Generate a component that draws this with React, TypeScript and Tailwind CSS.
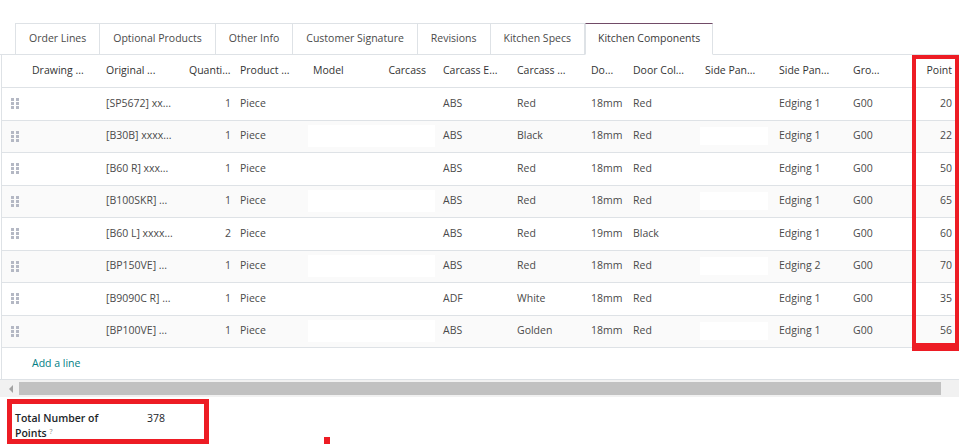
import React from "react";

type Row = {
  original: string;
  qty: number;
  carcassE: string;
  carcassColor: string;
  door: string;
  doorColor: string;
  sidePan: string;
  gro: string;
  point: number;
  patch?: boolean;
};

const rows: Row[] = [
  { original: "[SP5672] xx...", qty: 1, carcassE: "ABS", carcassColor: "Red", door: "18mm", doorColor: "Red", sidePan: "Edging 1", gro: "G00", point: 20 },
  { original: "[B30B] xxxx...", qty: 1, carcassE: "ABS", carcassColor: "Black", door: "18mm", doorColor: "Red", sidePan: "Edging 1", gro: "G00", point: 22, patch: true },
  { original: "[B60 R] xxx...", qty: 1, carcassE: "ABS", carcassColor: "Red", door: "18mm", doorColor: "Red", sidePan: "Edging 1", gro: "G00", point: 50 },
  { original: "[B100SKR] ...", qty: 1, carcassE: "ABS", carcassColor: "Red", door: "18mm", doorColor: "Red", sidePan: "Edging 1", gro: "G00", point: 65, patch: true },
  { original: "[B60 L] xxxx...", qty: 2, carcassE: "ABS", carcassColor: "Red", door: "19mm", doorColor: "Black", sidePan: "Edging 1", gro: "G00", point: 60 },
  { original: "[BP150VE] ...", qty: 1, carcassE: "ABS", carcassColor: "Red", door: "18mm", doorColor: "Red", sidePan: "Edging 2", gro: "G00", point: 70, patch: true },
  { original: "[B9090C R] ...", qty: 1, carcassE: "ADF", carcassColor: "White", door: "18mm", doorColor: "Red", sidePan: "Edging 1", gro: "G00", point: 35 },
  { original: "[BP100VE] ...", qty: 1, carcassE: "ABS", carcassColor: "Golden", door: "18mm", doorColor: "Red", sidePan: "Edging 1", gro: "G00", point: 56, patch: true },
];

const tabs = [
  "Order Lines",
  "Optional Products",
  "Other Info",
  "Customer Signature",
  "Revisions",
  "Kitchen Specs",
  "Kitchen Components",
];

// column track widths
const grid =
  "grid grid-cols-[22px_74px_83px_54px_70px_74px_56px_74px_74px_42px_72px_74px_74px_48px_66px]";

const Handle = () => (
  <svg width="8" height="11" viewBox="0 0 8 11" className="ml-[9px]">
    {[0, 4, 8].map((y) =>
      [0, 5].map((x) => <rect key={`${x}-${y}`} x={x} y={y} width="3" height="3" fill="#b4b8c4" />)
    )}
  </svg>
);

export default function App() {
  return (
    <div className="relative h-[444px] w-[959px] overflow-hidden bg-white pt-[23px] font-['Open_Sans',sans-serif] text-[10.5px] text-[#4a4a4a]">
      {/* notebook tabs */}
      <div className="flex border-b border-[#dee2e6] pl-[15px]">
        {tabs.map((t) => {
          const active = t === "Kitchen Components";
          return (
            <div
              key={t}
              className={
                active
                  ? "-mb-px flex h-[32px] items-center border border-b-white border-t-[#714b67] border-x-[#dee2e6] bg-white px-[12px] text-[#3a3a3a]"
                  : "flex h-[31px] items-center border border-b-0 border-[#dee2e6] px-[13px] -ml-px first:ml-0"
              }
            >
              {t}
            </div>
          );
        })}
      </div>

      {/* list */}
      <div className="ml-[1px] border-l border-[#dee2e6]">
        <div className={`${grid} h-[33px] items-center border-b border-[#dee2e6] text-[#333]`}>
          <div />
          <div className="px-2">Drawing ...</div>
          <div className="px-2">Original ...</div>
          <div className="pl-2 whitespace-nowrap">Quanti...</div>
          <div className="pl-[5px]">Product ...</div>
          <div className="px-2">Model</div>
          <div className="pr-[9px] text-right">Carcass</div>
          <div className="px-2">Carcass E...</div>
          <div className="px-2">Carcass ...</div>
          <div className="px-2">Do...</div>
          <div className="px-2">Door Col...</div>
          <div className="px-2">Side Pan...</div>
          <div className="px-2">Side Pan...</div>
          <div className="px-2">Gro...</div>
          <div className="pr-[7px] text-right">Point</div>
        </div>

        {rows.map((r, i) => (
          <div
            key={i}
            className={`${grid} h-[32.5px] items-center border-b border-[#dee2e6] ${r.patch ? "bg-[#fafafa]" : "bg-white"}`}
          >
            <Handle />
            <div />
            <div className="px-2 whitespace-nowrap">{r.original}</div>
            <div className="pr-[4px] text-right">{r.qty}</div>
            <div className="pl-[5px]">Piece</div>
            <div className="h-[22px] pl-[3px]">{r.patch && <div className="h-full w-full bg-white" />}</div>
            <div className="h-[22px]">{r.patch && <div className="h-full w-full bg-white" />}</div>
            <div className="px-2">{r.carcassE}</div>
            <div className="px-2">{r.carcassColor}</div>
            <div className="px-2">{r.door}</div>
            <div className="px-2">{r.doorColor}</div>
            <div className="h-[18px] px-[3px]">{r.patch && <div className="h-full w-full bg-white" />}</div>
            <div className="px-2 whitespace-nowrap">{r.sidePan}</div>
            <div className="px-2">{r.gro}</div>
            <div className="pr-[7px] text-right">{r.point}</div>
          </div>
        ))}

        <div className="flex h-[31px] items-center pl-[30px] text-[#017e84]">Add a line</div>
      </div>

      {/* horizontal scrollbar */}
      <div className="flex h-[18px] border-t border-[#dee2e6] bg-[#f1f1f1] pl-[2px]">
        <div className="flex w-[17px] items-center justify-center">
          <div className="h-0 w-0 border-y-[4px] border-r-[4px] border-y-transparent border-r-[#a3a3a3]" />
        </div>
        <div className="my-[2px] w-[922px] bg-[#c1c1c1]" />
      </div>

      {/* totals */}
      <div className="flex pl-[15px] pt-[14px] text-[#212529]">
        <div className="w-[132px] font-semibold leading-[15px]">
          Total Number of
          <br />
          Points <sup className="text-[7px] font-normal text-[#888]">?</sup>
        </div>
        <div className="leading-[15px]">378</div>
      </div>

      {/* red annotation marks */}
      <div className="absolute left-[912px] top-[55px] h-[296px] w-[47px] border-4 border-b-[8px] border-[#ed1c24]" />
      <div className="absolute left-[7px] top-[399px] h-[45px] w-[202px] border-[5px] border-[#ed1c24]" />
      <div className="absolute left-[324px] top-[437px] h-[7px] w-[6px] bg-[#ed1c24]" />
    </div>
  );
}
